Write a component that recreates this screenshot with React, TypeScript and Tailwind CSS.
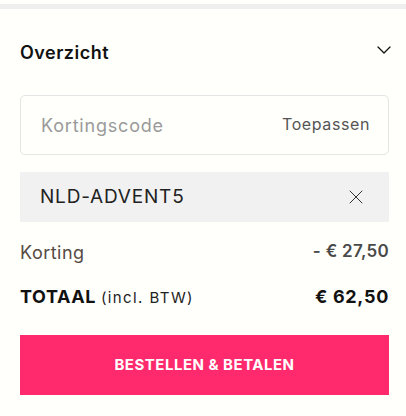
import { ChevronDown, X } from 'lucide-react'

export default function App() {
  return (
    <div className="min-h-[416px] w-[406px] bg-[#fffffb] font-['Inter',sans-serif] text-[#111]">
      <div className="pt-[4px]">
        <div className="h-[5px] bg-[#efefef]" />
      </div>
      <div className="pl-[20px] pr-[17px]">
        <div className="flex h-[80px] items-center justify-between pt-[7px]">
          <h2 className="text-[18px] font-semibold tracking-[0.5px]">Overzicht</h2>
          <ChevronDown className="mr-[-7px] mt-[-6px] h-[24px] w-[24px]" strokeWidth={1.3} />
        </div>

        <div className="mt-[6px] flex h-[60px] items-center justify-between rounded-[5px] border border-[#e4e4e4] pl-[20px] pr-[18px]">
          <span className="text-[18px] tracking-[0.8px] text-[#9a9a9a]">Kortingscode</span>
          <span className="mt-[-3px] text-[16px] tracking-[0.6px] text-[#555]">Toepassen</span>
        </div>

        <div className="mt-[17px] flex h-[50px] items-center justify-between bg-[#f1f1f1] pl-[20px] pr-[21px]">
          <span className="text-[19px] tracking-[0.8px] text-[#222]">NLD-ADVENT5</span>
          <X className="h-[24px] w-[24px] text-[#333]" strokeWidth={1} />
        </div>

        <div className="mt-[18px] flex h-[24px] items-center justify-between">
          <span className="text-[18px] tracking-[0.5px] text-[#554a44]">Korting</span>
          <span className="text-[17px] font-semibold tracking-[0.3px] text-[#4a4a4a]">- € 27,50</span>
        </div>

        <div className="mt-[20px] flex h-[24px] items-center justify-between">
          <span className="text-[18px] font-bold tracking-[0.6px]">
            TOTAAL <span className="text-[15px] font-normal tracking-[1.4px] text-[#222]">(incl. BTW)</span>
          </span>
          <span className="text-[18px] font-bold tracking-[0.7px]">€ 62,50</span>
        </div>

        <button className="mt-[27px] flex h-[60px] w-full items-center justify-center bg-[#ff2a6d] text-[15px] font-bold tracking-[0.5px] text-white">
          BESTELLEN &amp; BETALEN
        </button>
      </div>
    </div>
  )
}
